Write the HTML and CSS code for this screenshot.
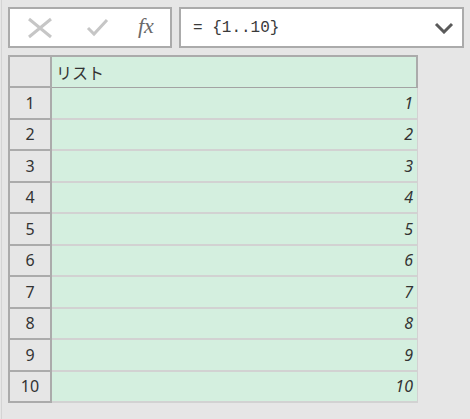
FILE: index.html
```html
<!DOCTYPE html>
<html>
  <head>
    <meta charset="utf-8" />
    <link rel="stylesheet" href="styles.css">
  </head>
  <body>
    <div class="page">
      <div class="bar">
        <div class="actions">
          <span class="icon">
            <svg width="26" height="22" viewBox="0 0 26 22">
              <path d="M2 2 L24 20 M24 2 L2 20" stroke="#c6c6c6" stroke-width="3" fill="none" />
            </svg>
          </span>
          <span class="icon check">
            <svg width="24" height="20" viewBox="0 0 24 20">
              <polyline points="2,10 8,16 21,2" stroke="#c6c6c6" stroke-width="3" fill="none" />
            </svg>
          </span>
          <span class="fx">fx</span>
        </div>
        <div class="formula">
          <span class="code">= {1..10}</span>
          <svg class="chev" width="20" height="12" viewBox="0 0 20 12">
            <polyline points="2,2 10,10 18,2" stroke="#5a5a5a" stroke-width="3" fill="none" />
          </svg>
        </div>
      </div>

      <div class="grid">
        <div class="num corner"></div>
        <div class="head">リスト</div>

        <div class="num">1</div><div class="cell">1</div>
        <div class="num">2</div><div class="cell">2</div>
        <div class="num">3</div><div class="cell">3</div>
        <div class="num">4</div><div class="cell">4</div>
        <div class="num">5</div><div class="cell">5</div>
        <div class="num">6</div><div class="cell">6</div>
        <div class="num">7</div><div class="cell">7</div>
        <div class="num">8</div><div class="cell">8</div>
        <div class="num">9</div><div class="cell">9</div>
        <div class="num">10</div><div class="cell">10</div>
      </div>
    </div>
  </body>
</html>
```

FILE: styles.css
```css
body {
  margin: 0;
  background-color: #e6e6e6;
  font-family: "Noto Sans", "Open Sans", sans-serif;
  color: #333333;
}

.page {
  margin-left: 1px;
  border-left: 1px solid #d4d4d4;
  padding: 7px 6px 0 6px;
  min-height: 100vh;
  box-sizing: border-box;
}

.bar {
  display: flex;
  gap: 7px;
  height: 41px;
}

.actions {
  width: 164px;
  box-sizing: border-box;
  border: 2px solid #ababab;
  background-color: white;
  display: flex;
  align-items: center;
  padding-left: 17px;
}

.icon {
  display: flex;
  align-items: center;
  margin-right: 33px;
}

.check {
  margin-right: 28px;
}

.icon svg {
  display: block;
}

.fx {
  font-family: "Liberation Serif", serif;
  font-style: italic;
  font-size: 22px;
  color: #6a6a6a;
  margin-top: -3px;
}

.formula {
  flex: 1;
  box-sizing: border-box;
  border: 2px solid #ababab;
  background-color: white;
  display: flex;
  align-items: center;
  padding: 0 8px 0 12px;
}

.code {
  flex: 1;
  font-family: "Liberation Mono", monospace;
  font-size: 16px;
  color: #3a3a3a;
}

.chev {
  display: block;
}

.grid {
  margin-top: 7px;
  display: grid;
  grid-template-columns: 44px 366px;
  grid-template-rows: 33px;
  grid-auto-rows: 31.5px;
}

.num {
  box-sizing: border-box;
  border-left: 2px solid #ababab;
  border-right: 2px solid #ababab;
  border-bottom: 2px solid #ababab;
  display: flex;
  align-items: center;
  justify-content: center;
  font-size: 16px;
}

.corner {
  border-top: 2px solid #ababab;
}

.head {
  box-sizing: border-box;
  background-color: #d4efdf;
  border-top: 2px solid #ababab;
  border-right: 2px solid #ababab;
  border-bottom: 1px solid #a3a3a3;
  display: flex;
  align-items: center;
  padding-left: 4px;
  font-family: "Noto Sans CJK JP", sans-serif;
  font-size: 16px;
}

.cell {
  box-sizing: border-box;
  background-color: #d4efdf;
  border-right: 1px solid #d2d2d2;
  border-bottom: 2px solid #d2d2d2;
  display: flex;
  align-items: center;
  justify-content: flex-end;
  padding-right: 4px;
  font-style: italic;
  font-size: 16px;
}
```
